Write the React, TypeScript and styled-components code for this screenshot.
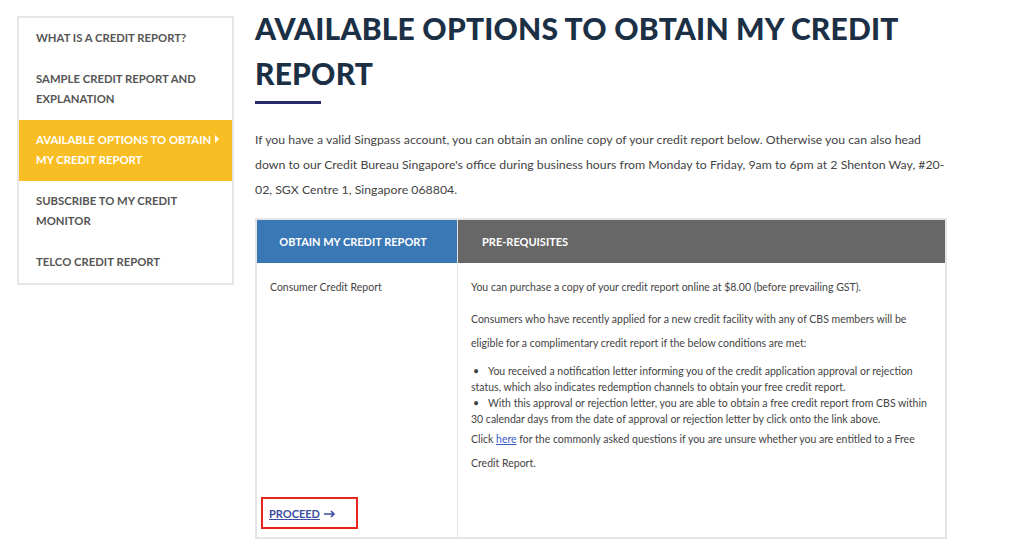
import React from 'react'
import styled, { createGlobalStyle } from 'styled-components'

const GlobalStyle = createGlobalStyle`
  body {
    margin: 0;
    background: #fff;
    font-family: Lato, 'Noto Sans', sans-serif;
  }
`

const Page = styled.div`
  display: flex;
  align-items: flex-start;
  gap: 21px;
  padding: 16px 0 0 17px;
`

const Sidebar = styled.nav`
  width: 217px;
  box-sizing: border-box;
  border: 2px solid #e6e6e6;
  display: flex;
  flex-direction: column;
`

const NavItem = styled.a<{ active?: boolean }>`
  position: relative;
  display: block;
  padding: 10px 4px 11px 17px;
  font-size: 11.3px;
  font-weight: 700;
  line-height: 20px;
  text-transform: uppercase;
  color: ${p => (p.active ? '#fff' : '#555')};
  background: ${p => (p.active ? '#f9be23' : 'transparent')};
  text-decoration: none;
`

const Caret = styled.span`
  position: absolute;
  top: 15px;
  right: 13px;
  width: 0;
  height: 0;
  border-top: 4px solid transparent;
  border-bottom: 4px solid transparent;
  border-left: 4px solid #fff;
`

const Main = styled.main`
  width: 692px;
  display: flex;
  flex-direction: column;
`

const Title = styled.h1`
  margin: -10px 0 0;
  font-size: 30px;
  line-height: 45px;
  font-weight: 900;
  letter-spacing: 0.2px;
  color: #1b2f45;
`

const Rule = styled.div`
  width: 66px;
  height: 3px;
  background: #272a6b;
  margin: 5px 0 23px;
`

const Intro = styled.p`
  margin: 0 0 16px;
  font-size: 12.3px;
  line-height: 25px;
  color: #444;
`

const Table = styled.div`
  display: grid;
  grid-template-columns: 200px 1fr;
  border: 2px solid #e4e4e4;
  width: 692px;
  box-sizing: border-box;
`

const HeadCell = styled.div<{ tone: 'blue' | 'grey'; center?: boolean }>`
  height: 43px;
  display: flex;
  align-items: center;
  justify-content: ${p => (p.center ? 'center' : 'flex-start')};
  padding: ${p => (p.center ? '0 8px 0 0' : '0 24px')};
  background: ${p => (p.tone === 'blue' ? '#3a77b5' : '#676767')};
  color: #fff;
  font-size: 11px;
  font-weight: 700;
  text-transform: uppercase;
  border-left: ${p => (p.tone === 'grey' ? '1px solid #e4e4e4' : 'none')};
`

const BodyCell = styled.div<{ divided?: boolean }>`
  display: flex;
  flex-direction: column;
  justify-content: space-between;
  padding: 12px 10px 8px 13px;
  border-left: ${p => (p.divided ? '1px solid #e4e4e4' : 'none')};
  font-size: 10.5px;
  color: #444;
  height: 274px;
  box-sizing: border-box;
`

const CellText = styled.p`
  margin: 0 0 8px;
  line-height: 24px;
`

const BulletList = styled.ul`
  margin: 0;
  padding: 0;
  list-style: none;
  line-height: 16px;
`

const Bullet = styled.li`
  &::before {
    content: '•';
    display: inline-block;
    width: 15px;
    padding-left: 2px;
  }
`

const TextLink = styled.a`
  color: #3a5cc4;
  text-decoration: underline;
`

const ProceedBox = styled.div`
  align-self: flex-start;
  margin-left: -9px;
  padding: 8px 20px 6px 6px;
  border: 2px solid #e8251b;
`

const Proceed = styled.a`
  display: inline-flex;
  align-items: center;
  gap: 4px;
  color: #3b4fa0;
  font-size: 11px;
  font-weight: 700;
  text-decoration: underline;
  line-height: 14px;
`

const Arrow = () => (
  <svg width="12" height="8" viewBox="0 0 12 8">
    <path d="M0 4h10M7 1l3 3-3 3" fill="none" stroke="#3b4fa0" strokeWidth="1.6" />
  </svg>
)

export default function App() {
  return (
    <>
      <GlobalStyle />
      <Page>
        <Sidebar>
          <NavItem>What is a credit report?</NavItem>
          <NavItem>Sample credit report and explanation</NavItem>
          <NavItem active>
            Available options to obtain my credit report
            <Caret />
          </NavItem>
          <NavItem>Subscribe to my credit monitor</NavItem>
          <NavItem>Telco credit report</NavItem>
        </Sidebar>
        <Main>
          <Title>AVAILABLE OPTIONS TO OBTAIN MY CREDIT REPORT</Title>
          <Rule />
          <Intro>
            If you have a valid Singpass account, you can obtain an online copy of your credit report below. Otherwise
            you can also head down to our Credit Bureau Singapore's office during business hours from Monday to Friday,
            9am to 6pm at 2 Shenton Way, #20-02, SGX Centre 1, Singapore 068804.
          </Intro>
          <Table>
            <HeadCell tone="blue" center>
              Obtain my credit report
            </HeadCell>
            <HeadCell tone="grey">Pre-requisites</HeadCell>
            <BodyCell>
              <CellText>Consumer Credit Report</CellText>
              <ProceedBox>
                <Proceed>
                  PROCEED <Arrow />
                </Proceed>
              </ProceedBox>
            </BodyCell>
            <BodyCell divided>
              <div>
                <CellText>You can purchase a copy of your credit report online at $8.00 (before prevailing GST).</CellText>
                <CellText>
                  Consumers who have recently applied for a new credit facility with any of CBS members will be
                  eligible for a complimentary credit report if the below conditions are met:
                </CellText>
                <BulletList>
                  <Bullet>
                    You received a notification letter informing you of the credit application approval or rejection
                    status, which also indicates redemption channels to obtain your free credit report.
                  </Bullet>
                  <Bullet>
                    With this approval or rejection letter, you are able to obtain a free credit report from CBS within
                    30 calendar days from the date of approval or rejection letter by click onto the link above.
                  </Bullet>
                </BulletList>
                <CellText>
                  Click <TextLink>here</TextLink> for the commonly asked questions if you are unsure whether you are
                  entitled to a Free Credit Report.
                </CellText>
              </div>
            </BodyCell>
          </Table>
        </Main>
      </Page>
    </>
  )
}
